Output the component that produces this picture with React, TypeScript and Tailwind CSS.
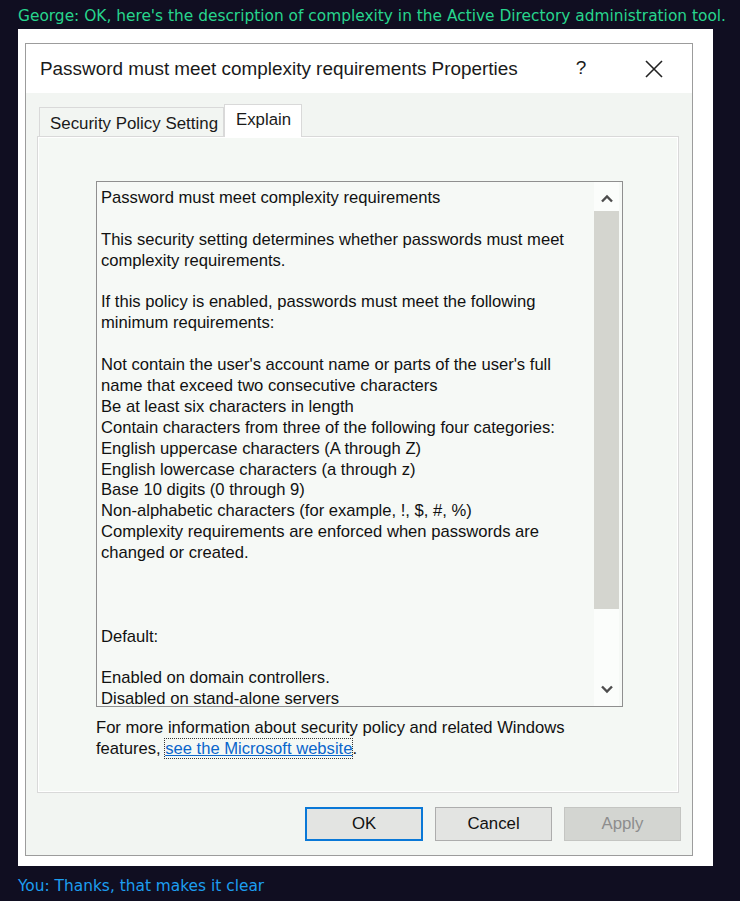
import React from "react";

const lines: string[] = [
  "Password must meet complexity requirements",
  "",
  "This security setting determines whether passwords must meet",
  "complexity requirements.",
  "",
  "If this policy is enabled, passwords must meet the following",
  "minimum requirements:",
  "",
  "Not contain the user's account name or parts of the user's full",
  "name that exceed two consecutive characters",
  "Be at least six characters in length",
  "Contain characters from three of the following four categories:",
  "English uppercase characters (A through Z)",
  "English lowercase characters (a through z)",
  "Base 10 digits (0 through 9)",
  "Non-alphabetic characters (for example, !, $, #, %)",
  "Complexity requirements are enforced when passwords are",
  "changed or created.",
  "",
  "",
  "",
  "Default:",
  "",
  "Enabled on domain controllers.",
  "Disabled on stand-alone servers",
];

function Chevron({ up }: { up?: boolean }) {
  return (
    <svg width="14" height="9" viewBox="0 0 14 9">
      <path
        d={up ? "M2 7.5 L7 2.5 L12 7.5" : "M2 1.5 L7 6.5 L12 1.5"}
        fill="none"
        stroke="#4d4d4d"
        strokeWidth="2.4"
      />
    </svg>
  );
}

export default function App() {
  return (
    <div className="w-[740px] h-[901px] bg-[#100e21] overflow-hidden flex flex-col" style={{ fontFamily: "'DejaVu Sans', sans-serif" }}>
      <div className="pl-[18px] pt-[6px] h-[29px] text-[15.4px] leading-[20px] text-[#27d58d] whitespace-nowrap">
        George: OK, here's the description of complexity in the Active Directory administration tool.
      </div>
      <div className="ml-[18px] w-[695px] h-[837px] bg-white pl-[7px] pt-[14px]">
        <div
          className="w-[668px] h-[813px] border border-[#9c9c9c] flex flex-col text-[#1a1a1a]"
          style={{ fontFamily: "'Liberation Sans', Arial, sans-serif" }}
        >
          {/* title bar */}
          <div className="h-[49px] bg-white flex items-center pl-[14px] shrink-0">
            <div className="text-[18.9px] flex-1 pt-[1px]">Password must meet complexity requirements Properties</div>
            <div className="w-[20px] text-[19px] text-center mr-[54px]">?</div>
            <svg width="18" height="18" viewBox="0 0 18 18" className="mr-[29px]">
              <path d="M1 1 L17 17 M17 1 L1 17" stroke="#222" strokeWidth="1.6" />
            </svg>
          </div>
          {/* body */}
          <div className="flex-1 bg-[#f2f5f2] pl-[11px] pt-[11px] flex flex-col">
            {/* tabs */}
            <div className="flex items-end h-[32px] pl-[2px] relative z-10">
              <div className="w-[185px] h-[29px] border border-b-0 border-[#d9d9d9] bg-[#f2f5f2] text-[16.9px] pl-[10px] leading-[29px] pt-[1px]">
                Security Policy Setting
              </div>
              <div className="w-[78px] h-[33px] -mb-[1px] border border-b-0 border-[#d9d9d9] bg-white text-[16.8px] pl-[11px] leading-[30px]">
                Explain
              </div>
            </div>
            {/* panel */}
            <div className="w-[642px] h-[657px] border border-[#d9d9d9] bg-white p-[1px]">
              <div className="w-full h-full bg-[#f4f8f4] pl-[57px] pt-[43px]">
                <div className="w-[527px] h-[526px] border border-[#8f8f8f] bg-[#f6f9f6] flex overflow-hidden">
                  <div className="flex-1 pl-[4px] pt-[6px] text-[16.6px] leading-[20.9px] text-[#111] overflow-hidden">
                    {lines.map((l, i) => (
                      <div key={i} className="whitespace-nowrap h-[20.9px]">
                        {l || "\u00a0"}
                      </div>
                    ))}
                  </div>
                  <div className="w-[25px] mr-[3px] bg-[#fbfdfb] flex flex-col items-center">
                    <div className="h-[29px] flex items-center justify-center pt-[4px]">
                      <Chevron up />
                    </div>
                    <div className="w-full h-[398px] bg-[#d4d5cf]" />
                    <div className="flex-1" />
                    <div className="h-[30px] flex items-center justify-center pb-[4px]">
                      <Chevron />
                    </div>
                  </div>
                </div>
                <div className="mt-[11px] text-[16.6px] leading-[20.83px] text-[#111]">
                  <div className="whitespace-nowrap">For more information about security policy and related Windows</div>
                  <div className="whitespace-nowrap">
                    features,{" "}
                    <span className="text-[#0a66cc] underline decoration-[#0a66cc] outline-1 outline-dotted outline-[#333]">
                      see the Microsoft website
                    </span>
                    .
                  </div>
                </div>
              </div>
            </div>
            {/* buttons */}
            <div className="flex justify-end gap-[12px] pr-[11px] mt-[14px] text-[16.8px]">
              <div className="w-[118px] h-[34px] border-2 border-[#0a78d7] bg-[#e3e4e2] flex items-center justify-center text-[#111]">
                OK
              </div>
              <div className="w-[117px] h-[34px] border border-[#adadad] bg-[#e3e4e2] flex items-center justify-center text-[#111]">
                Cancel
              </div>
              <div className="w-[117px] h-[34px] border border-[#c4c5c2] bg-[#d3d5d1] flex items-center justify-center text-[#8d8d8d]">
                Apply
              </div>
            </div>
          </div>
        </div>
      </div>
      <div className="pl-[18px] pt-[10px] text-[15.4px] leading-[20px] text-[#1d9ef0] whitespace-nowrap">
        You: Thanks, that makes it clear
      </div>
    </div>
  );
}
